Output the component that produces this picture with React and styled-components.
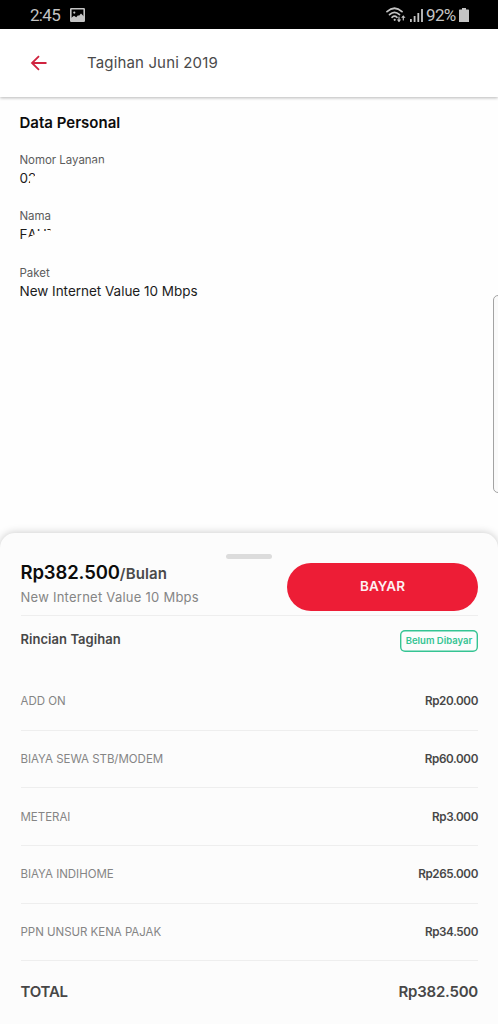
import React from "react"
import styled, { createGlobalStyle } from "styled-components"

const GlobalStyle = createGlobalStyle`
  * {
    box-sizing: border-box;
  }
  body {
    margin: 0;
    background: #fefefe;
    font-family: Inter, "Liberation Sans", sans-serif;
    overflow: hidden;
  }
`

const Screen = styled.div`
  position: relative;
  display: flex;
  flex-direction: column;
  width: 498px;
  height: 1024px;
  background: #fefefe;
  overflow: hidden;
`

const StatusBar = styled.div`
  display: flex;
  flex: none;
  justify-content: space-between;
  height: 29px;
  padding: 1px 29px 0 30px;
  background: #000;
`

const StatusGroup = styled.div`
  display: flex;
  align-items: center;
  gap: ${(p) => p.$gap}px;
`

const StatusText = styled.span`
  font-family: Roboto, sans-serif;
  font-size: 17px;
  line-height: 28px;
  letter-spacing: -0.7px;
  color: #c4c4c4;
`

const Header = styled.header`
  position: relative;
  display: flex;
  flex: none;
  align-items: center;
  height: 68px;
  padding-left: 30px;
  background: #fff;
  box-shadow: 0 1px 3px rgba(0, 0, 0, 0.28);
`

const BackButton = styled.button`
  display: flex;
  width: 17px;
  margin-right: 40px;
  padding: 0;
  border: 0;
  background: none;
`

const HeaderTitle = styled.h1`
  margin: 0;
  font-size: 15px;
  font-weight: 400;
  line-height: 20px;
  letter-spacing: 0.15px;
  color: #4a4a4a;
`

const Personal = styled.section`
  flex: 1;
  padding: 16px 20px 0 19.5px;
`

const SectionTitle = styled.h2`
  margin: 0 0 17.5px;
  font-size: 15px;
  font-weight: 600;
  line-height: 20px;
  color: #0c0c0c;
`

const Field = styled.div`
  margin-bottom: 19.8px;
`

const FieldLabel = styled.div`
  font-size: 11.5px;
  line-height: 18px;
  letter-spacing: -0.04px;
  color: #5c5c5c;
`

const FieldValue = styled.div`
  display: flex;
  font-size: 13.5px;
  line-height: 19px;
  letter-spacing: -0.02px;
  color: #1c1c1c;
`

const Cut = styled.span`
  clip-path: ${(p) => p.$shape};
`

const EdgePanel = styled.div`
  position: absolute;
  top: 295px;
  right: -8px;
  width: 13px;
  height: 198px;
  border: 1px solid #a3a3a3;
  border-radius: 5px;
  background: #fafafa;
`

const Sheet = styled.section`
  display: flex;
  flex: none;
  flex-direction: column;
  height: 491px;
  padding: 21px 20px 0 20.5px;
  border-radius: 15px 15px 0 0;
  background: #fcfcfc;
  box-shadow: 0 0 9px rgba(0, 0, 0, 0.22);
`

const Handle = styled.div`
  align-self: center;
  flex: none;
  width: 46px;
  height: 5px;
  border-radius: 3px;
  background: #dcdcdc;
`

const Summary = styled.div`
  display: flex;
  flex: none;
  justify-content: space-between;
  height: 57px;
  padding-top: 3.5px;
  border-bottom: 1px solid #eee;
`

const Price = styled.div`
  margin-top: -1px;
  font-size: 18.5px;
  font-weight: 600;
  line-height: 20px;
  letter-spacing: -0.13px;
  color: #0c0c0c;
`

const Period = styled.span`
  font-size: 15px;
  letter-spacing: 0.1px;
  line-height: 1;
  color: #4a4a4a;
`

const PlanName = styled.div`
  margin-top: 6px;
  font-size: 13px;
  line-height: 18px;
  letter-spacing: 0.25px;
  color: #858585;
`

const PayButton = styled.button`
  width: 191px;
  height: 48.5px;
  padding: 0 0 2px;
  border: 0;
  border-radius: 25px;
  background: #ed1d36;
  font-family: inherit;
  font-size: 13.5px;
  font-weight: 600;
  color: #fdf0f1;
`

const BillHeader = styled.div`
  display: flex;
  flex: none;
  justify-content: space-between;
  height: 57px;
  padding-top: 14px;
`

const BillTitle = styled.h3`
  margin: 0;
  font-size: 13px;
  font-weight: 600;
  line-height: 18px;
  letter-spacing: 0.05px;
  color: #474747;
`

const Badge = styled.span`
  width: 78px;
  height: 22px;
  border-radius: 5px;
  box-shadow: inset 0 0 0 1.4px #35c493;
  font-size: 9.5px;
  font-weight: 600;
  line-height: 21px;
  text-align: center;
  color: #35c493;
`

const BillRow = styled.div`
  display: flex;
  flex: none;
  align-items: center;
  justify-content: space-between;
  height: 57.65px;
  border-bottom: 1px solid #eee;
`

const ItemName = styled.span`
  font-size: 11.5px;
  letter-spacing: -0.03px;
  color: #858585;
`

const ItemAmount = styled.span`
  font-size: 11.7px;
  font-weight: 600;
  letter-spacing: -0.38px;
  color: #474747;
`

const TotalRow = styled.div`
  display: flex;
  justify-content: space-between;
  padding-top: 21px;
  font-size: 15px;
  font-weight: 600;
  line-height: 20px;
  letter-spacing: -0.22px;
  color: #474747;
`

const bills = [
  { name: "ADD ON", amount: "Rp20.000" },
  { name: "BIAYA SEWA STB/MODEM", amount: "Rp60.000" },
  { name: "METERAI", amount: "Rp3.000" },
  { name: "BIAYA INDIHOME", amount: "Rp265.000" },
  { name: "PPN UNSUR KENA PAJAK", amount: "Rp34.500" },
]

const PictureIcon = () => (
  <svg width="15" height="14" viewBox="0 0 15 14">
    <rect x="0.8" y="0.8" width="13.4" height="12.4" rx="0.4" fill="none" stroke="#c4c4c4" strokeWidth="1.6" />
    <circle cx="4.3" cy="4.6" r="1.1" fill="#c4c4c4" />
    <path d="M1 10 4 7.8 6.2 9.2 8 7.2 9 7.8 11 5.6 14 8.4V13H1z" fill="#c4c4c4" />
  </svg>
)

const WifiIcon = () => (
  <svg width="20" height="16" viewBox="0 0 20 16" fill="none" stroke="#c4c4c4" strokeWidth="1.7" strokeLinecap="round">
    <path d="M1 4.7Q8.5-2.2 16 4.7" />
    <path d="M3.5 7.6Q8.5 3.1 13.5 7.6" />
    <path d="M6 10.3Q8.5 8.1 11 10.3" />
    <circle cx="8.7" cy="12.8" r="1.1" fill="#c4c4c4" stroke="none" />
    <path d="M13 10v4M17.3 13V9.6" strokeWidth="1.2" />
    <path d="M10.8 12.6h4.4L13 15.2zM15.1 10.8h4.4l-2.2-2.6z" fill="#c4c4c4" stroke="none" />
  </svg>
)

const SignalIcon = () => (
  <svg width="13" height="13" viewBox="0 0 13 13" fill="#c4c4c4">
    <path d="M0 10h1.8v3H0zM3.7 7h1.8v6H3.7zM7.4 4h1.8v9H7.4zM11.1 0h1.8v13h-1.8z" />
  </svg>
)

const BatteryIcon = () => (
  <svg width="10" height="14" viewBox="0 0 10 14" fill="#c4c4c4">
    <path d="M3 0h4v1.5h2.3a.7.7 0 0 1 .7.7V14H0V2.2a.7.7 0 0 1 .7-.7H3z" />
  </svg>
)

const ArrowIcon = () => (
  <svg width="17" height="16" viewBox="0 0 17 16" fill="none" stroke="#d0233f" strokeWidth="1.8">
    <path d="M16.5 8H2M9 1.2 2 8l7 6.8" />
  </svg>
)

const App = () => {
  return (
    <Screen>
      <GlobalStyle />
      <StatusBar>
        <StatusGroup $gap={10}>
          <StatusText>2:45</StatusText>
          <PictureIcon />
        </StatusGroup>
        <StatusGroup $gap={3.5}>
          <WifiIcon />
          <SignalIcon />
          <StatusText>92%</StatusText>
          <BatteryIcon />
        </StatusGroup>
      </StatusBar>
      <Header>
        <BackButton aria-label="Kembali">
          <ArrowIcon />
        </BackButton>
        <HeaderTitle>Tagihan Juni 2019</HeaderTitle>
      </Header>
      <Personal>
        <SectionTitle>Data Personal</SectionTitle>
        <Field>
          <FieldLabel>
            <Cut $shape="polygon(0 0, 100% 0, 100% 76%, 85% 76%, 74% 100%, 0 100%)">Nomor Layanan</Cut>
          </FieldLabel>
          <FieldValue>
            0<Cut $shape="polygon(0 0, 85% 0, 85% 38%, 25% 52%, 25% 100%, 0 100%)">2</Cut>
          </FieldValue>
        </Field>
        <Field>
          <FieldLabel>Nama</FieldLabel>
          <FieldValue>
            F<Cut $shape="polygon(0 0, 78% 0, 78% 48%, 0 66%)">A</Cut>
            <Cut $shape="inset(0 5px 70% 0)">UT</Cut>
          </FieldValue>
        </Field>
        <Field>
          <FieldLabel>Paket</FieldLabel>
          <FieldValue>New Internet Value 10 Mbps</FieldValue>
        </Field>
      </Personal>
      <Sheet>
        <Handle />
        <Summary>
          <div>
            <Price>
              Rp382.500<Period>/Bulan</Period>
            </Price>
            <PlanName>New Internet Value 10 Mbps</PlanName>
          </div>
          <PayButton>BAYAR</PayButton>
        </Summary>
        <BillHeader>
          <BillTitle>Rincian Tagihan</BillTitle>
          <Badge>Belum Dibayar</Badge>
        </BillHeader>
        {bills.map((bill) => (
          <BillRow key={bill.name}>
            <ItemName>{bill.name}</ItemName>
            <ItemAmount>{bill.amount}</ItemAmount>
          </BillRow>
        ))}
        <TotalRow>
          <span>TOTAL</span>
          <span>Rp382.500</span>
        </TotalRow>
      </Sheet>
      <EdgePanel />
    </Screen>
  )
}

export default App
